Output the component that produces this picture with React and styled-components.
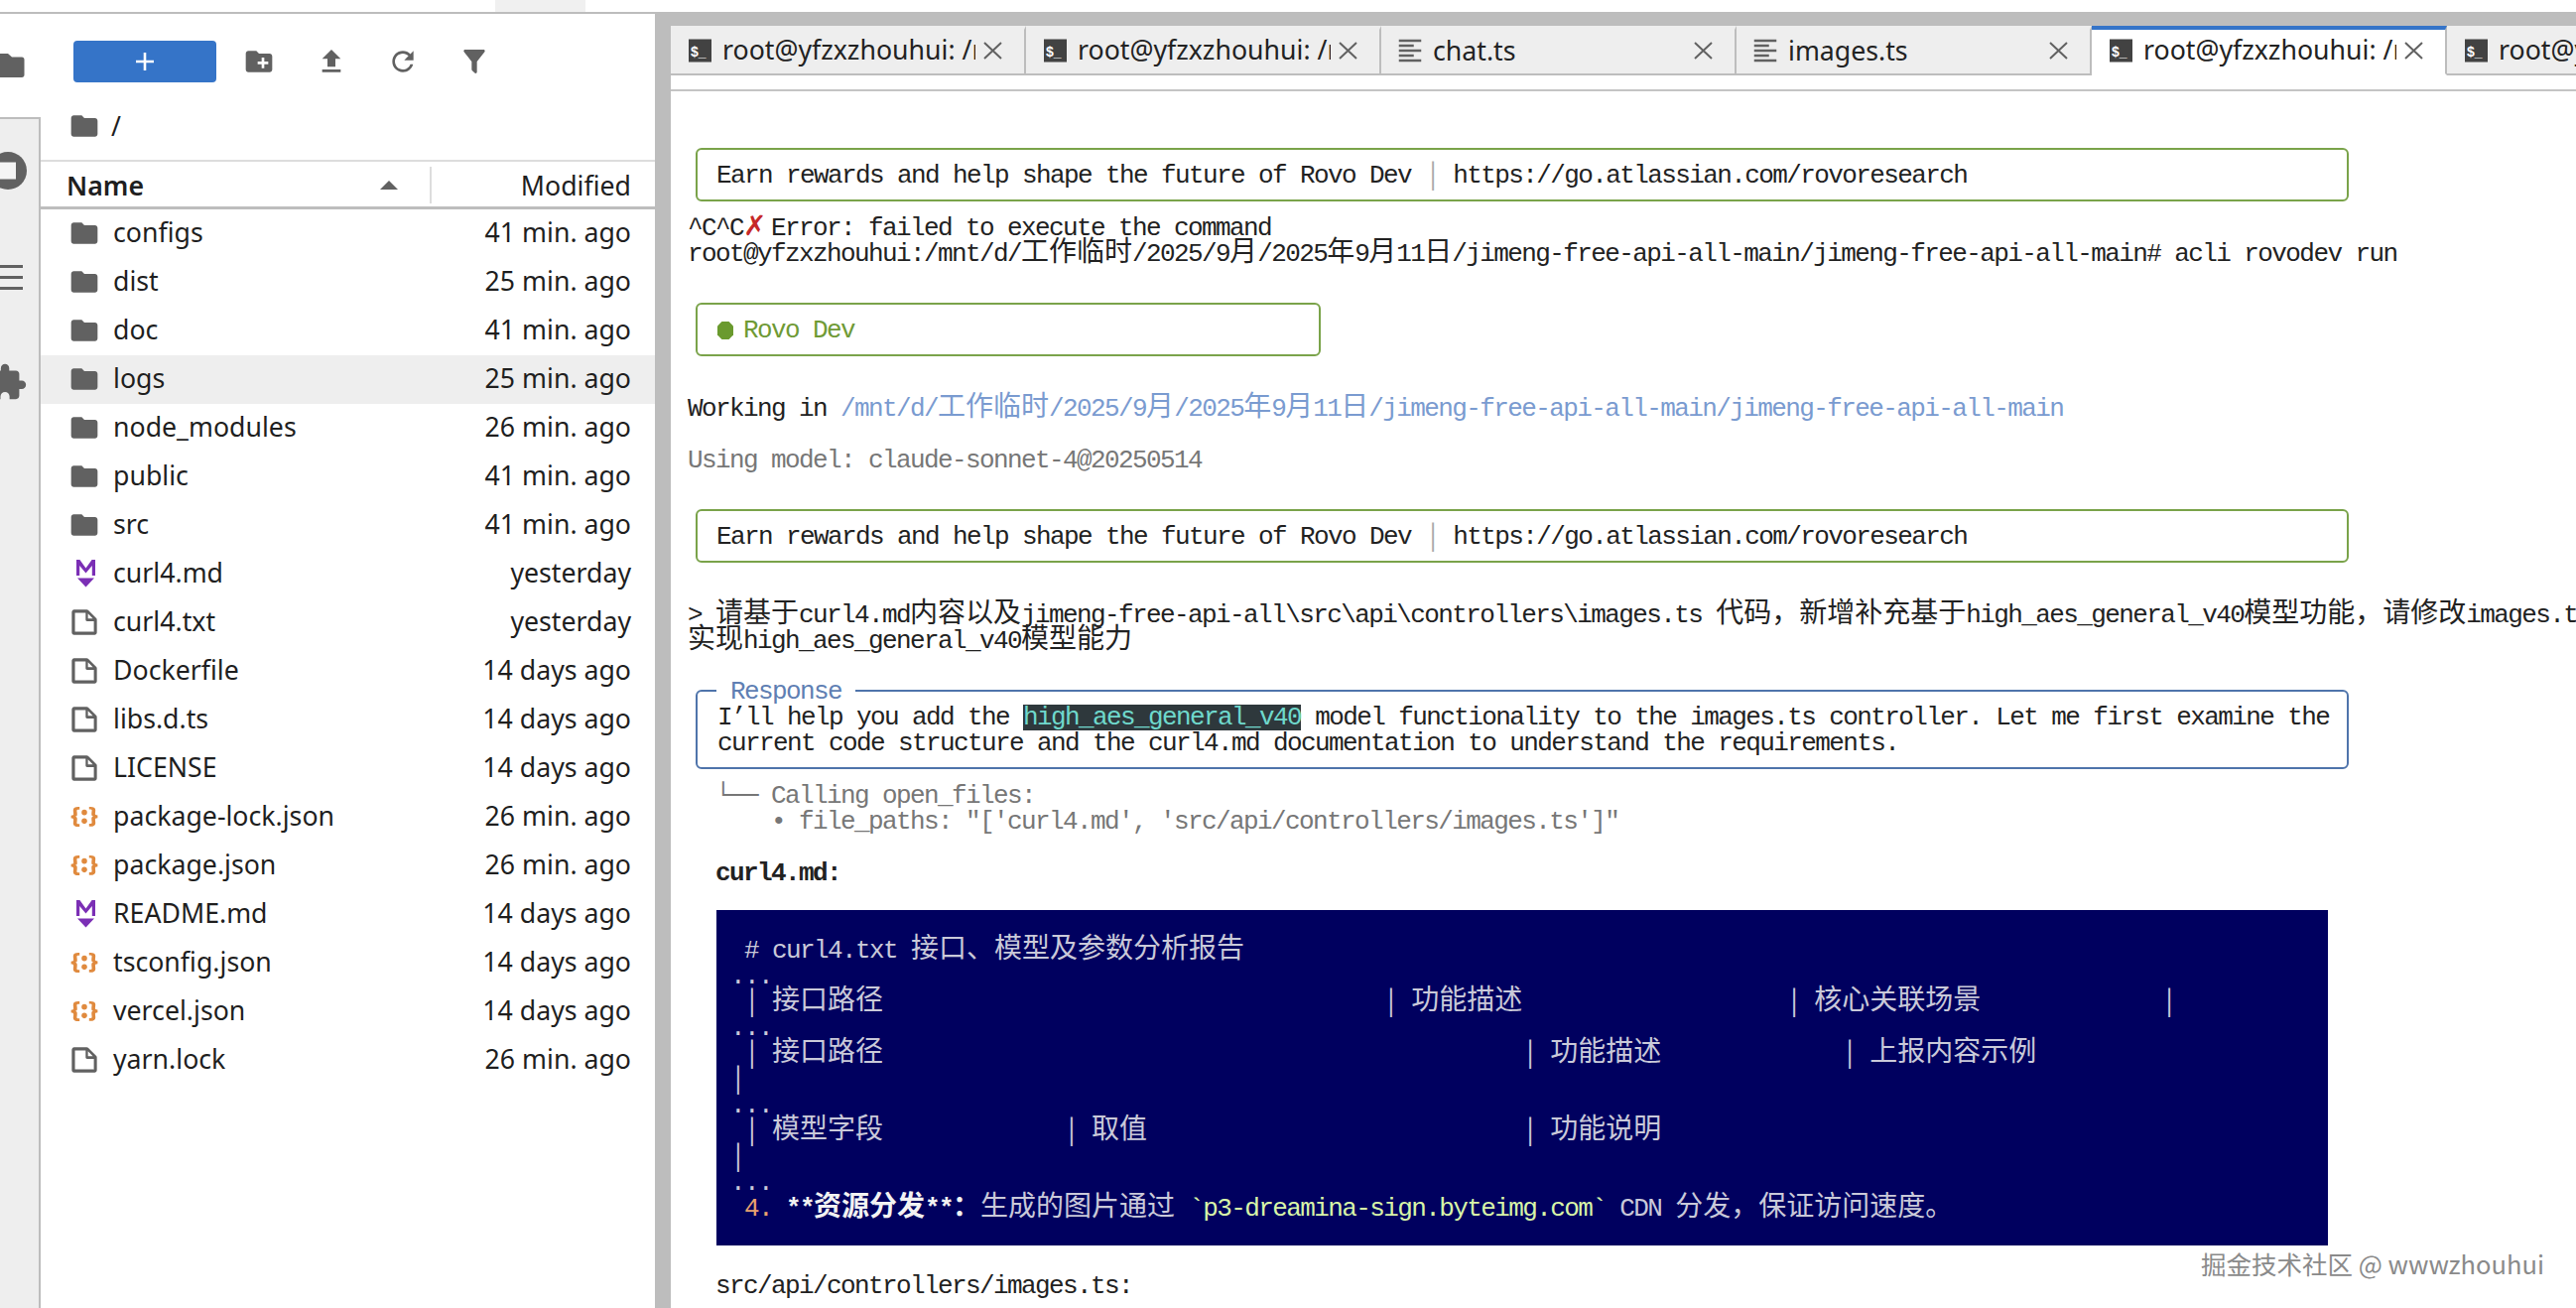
import React from "react";
import styled, { createGlobalStyle } from "styled-components";

const Global = createGlobalStyle`
  html, body {
    margin: 0;
    padding: 0;
    background: #fff;
  }
  body {
    width: 2596px;
    height: 1318px;
    overflow: hidden;
  }
`;

const Page = styled.div`
  position: relative;
  width: 2596px;
  height: 1318px;
  overflow: hidden;
  display: flex;
  flex-direction: column;
  font-family: "Noto Sans", sans-serif;
  color: #1f1f1f;
`;
const TopStrip = styled.div`
  height: 12px;
  flex: none;
  background: #fff;
  padding-left: 499px;
  border-bottom: 2px solid #bdbdbd;
`;
const TopTab = styled.div`
  width: 91px;
  height: 12px;
  background: #f0f0f0;
`;
const Body = styled.div`
  flex: 1;
  display: flex;
  min-height: 0;
`;

/* left: file browser */
const LeftPanel = styled.div`
  width: 660px;
  flex: none;
  display: flex;
  flex-direction: column;
  background: #fff;
`;
const Toolbar = styled.div`
  height: 104px;
  flex: none;
  box-sizing: border-box;
  padding-top: 27px;
  display: flex;
  align-items: flex-start;
`;
const ClippedFolder = styled.svg`
  width: 25px;
  height: 26px;
  margin-top: 12px;
  margin-right: 49px;
  fill: #616161;
`;
const NewButton = styled.div`
  width: 144px;
  height: 42px;
  border-radius: 4px;
  background: #3574c8;
  display: flex;
  align-items: center;
  justify-content: center;
  margin-right: 27px;
`;
const ToolIcon = styled.svg`
  width: 32px;
  height: 32px;
  margin: 5px ${(p) => p.$gap || 0}px 0 0;
  fill: #616161;
  flex: none;
`;
const Lower = styled.div`
  flex: 1;
  display: flex;
  min-height: 0;
`;
const Rail = styled.div`
  width: 41px;
  flex: none;
  box-sizing: border-box;
  background: #eee;
  border-top: 2px solid #bdbdbd;
  border-right: 2px solid #bdbdbd;
  padding-top: 33px;
  display: flex;
  flex-direction: column;
  align-items: flex-start;
`;
const RailStop = styled.svg`
  width: 27px;
  height: 38px;
  margin-bottom: 76px;
`;
const RailMenu = styled.div`
  width: 23px;
  height: 25px;
  margin-bottom: 73px;
  display: flex;
  flex-direction: column;
  justify-content: space-between;
  span {
    display: block;
    height: 3px;
    background: #616161;
  }
`;
const RailPuzzle = styled.svg`
  width: 27px;
  height: 40px;
  fill: #616161;
`;
const Browser = styled.div`
  flex: 1;
  display: flex;
  flex-direction: column;
  min-width: 0;
`;
const Crumbs = styled.div`
  height: 43px;
  flex: none;
  box-sizing: border-box;
  display: flex;
  align-items: center;
  padding: 0 0 26px 28px;
  font-size: 26.700px;
  span {
    margin-left: 11px;
  }
`;
const FileIcon = styled.svg`
  width: 32px;
  height: 32px;
  flex: none;
  fill: ${(p) => p.$color || "#616161"};
`;
const ListHeader = styled.div`
  height: 44px;
  flex: none;
  display: flex;
  align-items: center;
  border-top: 2px solid #ddd;
  border-bottom: 3px solid #bdbdbd;
  padding: 1px 24px 0 26px;
  font-size: 26.700px;
`;
const NameHead = styled.div`
  font-weight: 600;
  flex: 1;
`;
const SortCaret = styled.div`
  width: 0;
  height: 0;
  border-left: 9px solid transparent;
  border-right: 9px solid transparent;
  border-bottom: 9px solid #616161;
  margin-right: 32px;
`;
const HeadDivider = styled.div`
  width: 2px;
  height: 37px;
  background: #ddd;
  margin-right: 90px;
`;
const FileRow = styled.div`
  height: 49px;
  flex: none;
  box-sizing: border-box;
  display: flex;
  align-items: center;
  padding: 0 24px 2px 28px;
  font-size: 26.700px;
  background: ${(p) => (p.$active ? "#eee" : "transparent")};
`;
const FileName = styled.div`
  flex: 1;
  margin: 0 0 2px 13px;
  white-space: nowrap;
`;
const FileTime = styled.div`
  white-space: nowrap;
  margin-bottom: 2px;
`;
const HeadTime = styled.div`
  white-space: nowrap;
`;

const Gutter = styled.div`
  flex: 1;
  min-width: 0;
  background: #bdbdbd;
  padding: 12px 0 0 16px;
  display: flex;
  flex-direction: column;
`;
const TabBar = styled.div`
  height: 50px;
  flex: none;
  display: flex;
  background: #eee;
  overflow: hidden;
`;
const Tab = styled.div`
  width: 358px;
  flex: none;
  box-sizing: border-box;
  display: flex;
  align-items: center;
  padding: 0 22px 0 14px;
  font-size: 26.700px;
  color: #222;
  border-right: 2px solid #bdbdbd;
  background: ${(p) => (p.$active ? "#fff" : "#eee")};
  border-top: 4px solid ${(p) => (p.$active ? "#3574c8" : "#eee")};
  border-bottom: 2px solid ${(p) => (p.$active ? "#fff" : "#bdbdbd")};
`;
const TabTitle = styled.div`
  flex: 1;
  min-width: 0;
  overflow: hidden;
  white-space: nowrap;
  margin: -4px 8px 0 8px;
`;
const TabIconBox = styled.svg`
  width: 30px;
  height: 30px;
  flex: none;
  margin-top: -2px;
`;
const CloseMark = styled.svg`
  width: 19px;
  height: 18px;
  flex: none;
  stroke: #616161;
  stroke-width: 2;
  margin-top: -2px;
`;
const TabGap = styled.div`
  height: 14px;
  flex: none;
  background: #fff;
  border-bottom: 2px solid #c4c4c4;
`;

/* right: terminal */
const Terminal = styled.div`
  flex: 1;
  min-height: 0;
  background: #fff;
  overflow: hidden;
  padding: 45px 0 0 17px;
  font-family: "Liberation Mono", monospace;
  font-size: 26px;
  letter-spacing: -1.600px;
  line-height: 26px;
  color: #222;
`;
const Line = styled.div`
  box-sizing: border-box;
  height: 26px;
  padding-top: 2px;
  white-space: pre;
  color: ${(p) => p.$color || "inherit"};
  font-weight: ${(p) => (p.$bold ? 700 : 400)};
`;
const Han = styled.span`
  font-family: "Noto Sans CJK SC", sans-serif;
  font-size: 28px;
  letter-spacing: 0;
  line-height: 0;
  font-weight: inherit;
`;
const Box = styled.div`
  box-sizing: border-box;
  width: ${(p) => p.$width}px;
  height: 54px;
  margin: 12px 0 12px 8px;
  border: 2px solid #7aa34a;
  border-radius: 6px;
  padding: 13px 0 0 19px;
  white-space: pre;
  color: ${(p) => p.$color || "inherit"};
`;
const Bar = styled.span`
  color: #aaa;
`;
const Hexagon = styled.svg`
  width: 16px;
  height: 18px;
  vertical-align: -2px;
  fill: #6a9a2e;
  margin: 0 10px 0 1px;
`;
const ResponseBox = styled.div`
  position: relative;
  box-sizing: border-box;
  width: 1666px;
  height: 80px;
  margin: 12px 0 12px 8px;
  border: 2px solid #4f74ab;
  border-radius: 6px;
  padding: 13px 0 0 20px;
  white-space: pre;
`;
const Legend = styled.span`
  position: absolute;
  top: -13px;
  left: 19px;
  background: #fff;
  padding: 0 14px;
  color: #5f7fb3;
`;
const Mark = styled.span`
  display: inline-block;
  height: 26px;
  background: #2e383c;
  color: #6fd8cc;
`;
const CrossMark = styled.span`
  display: inline-block;
  width: 28px;
  color: #c62828;
  font-family: "DejaVu Sans", sans-serif;
  font-size: 28px;
  letter-spacing: 0;
  line-height: 0;
`;
const Path = styled.span`
  color: #7a9bd0;
`;
const NavyBlock = styled.div`
  width: 1624px;
  height: 338px;
  margin: 26px 0 0 29px;
  box-sizing: border-box;
  padding: 26px 0 0 14px;
  background: #00005f;
  color: #c9c9d9;
`;
const Orange = styled.span`
  color: #e8a26e;
`;
const Strong = styled.span`
  color: #f2f2f2;
  font-weight: 700;
`;
const Code = styled.span`
  color: #d8f5a8;
`;
const Watermark = styled.div`
  position: absolute;
  left: 2218px;
  top: 1256px;
  font-family: "Noto Sans CJK SC", "Noto Sans", sans-serif;
  font-size: 25.500px;
  line-height: 34px;
  white-space: nowrap;
  color: #8a8a8a;
  text-shadow: 0 0 2px #fff, 1px 1px 1px #fff;
`;

// CJK cells are two columns wide, so they get their own font size
const hanRun = /([\u3000-\u9fff\uff00-\uffef]+)/;
const Cn = ({ children }) =>
  String(children)
    .split(hanRun)
    .map((part, i) => (i % 2 ? <Han key={i}>{part}</Han> : part));

const sp = (n) => " ".repeat(n);

const folderPath =
  "M10 4H4c-1.100 0-1.990.9-1.990 2L2 18c0 1.100.9 2 2 2h16c1.100 0 2-.9 2-2V8c0-1.100-.9-2-2-2h-8l-2-2z";
const filePath =
  "M19.300 8.200l-5.500-5.500c-.3-.3-.7-.5-1.200-.5H3.900c-.8.1-1.600.9-1.600 1.800v14.100c0 .9.7 1.600 1.600 1.600h14.200c.9 0 1.600-.7 1.600-1.600V9.400c.1-.5-.1-.9-.4-1.200zm-5.800-3.300l3.400 3.600h-3.400V5zm3.900 12.700H4.700c-.1 0-.2 0-.2-.2V4.700c0-.1.1-.2.2-.2h7.200v4.400s0 .8.3 1.100c.3.3 1.100.3 1.100.3h4.300v7.200s-.1.2-.2.2z";
const jsonPath =
  "M20.200 11.800c-1.600 0-1.700.5-1.700 1 0 .4.1.9.1 1.300.1.5.1.9.1 1.300 0 1.700-1.400 2.300-3.500 2.300h-.9v-1.900h.5c1.100 0 1.400 0 1.400-.8 0-.3 0-.6-.1-1 0-.4-.1-.8-.1-1.200 0-1.300 0-1.800 1.300-2-1.300-.2-1.300-.7-1.300-2 0-.4.1-.8.1-1.200.1-.4.1-.7.1-1 0-.8-.4-.7-1.400-.8h-.5V4.100h.9c2.200 0 3.500.7 3.500 2.300 0 .4-.1.9-.1 1.300-.1.5-.1.9-.1 1.300 0 .5.2 1 1.700 1v1.800zM1.800 10.100c1.600 0 1.700-.5 1.700-1 0-.4-.1-.9-.1-1.300-.1-.5-.1-.9-.1-1.300 0-1.600 1.400-2.300 3.500-2.300h.9v1.900h-.5c-1 0-1.400 0-1.400.8 0 .3 0 .6.1 1 0 .2.1.6.1 1 0 1.300 0 1.800-1.300 2C6 11.200 6 11.700 6 13c0 .4-.1.8-.1 1.200-.1.3-.1.7-.1 1 0 .8.3.8 1.400.8h.5v1.900h-.9c-2.100 0-3.500-.6-3.500-2.300 0-.4.1-.9.1-1.300.1-.5.1-.9.1-1.300 0-.5-.2-1-1.700-1v-1.800z";

const FolderIcon = () => (
  <FileIcon viewBox="0 0 24 24">
    <path d={folderPath} />
  </FileIcon>
);
const PlainIcon = () => (
  <FileIcon viewBox="0 0 22 22">
    <path d={filePath} />
  </FileIcon>
);
const JsonIcon = () => (
  <FileIcon viewBox="0 0 22 22" $color="#e08a3e">
    <path d={jsonPath} />
    <circle cx="11" cy="8" r="1.900" />
    <circle cx="11" cy="14" r="1.900" />
  </FileIcon>
);
const MarkdownIcon = () => (
  <FileIcon viewBox="0 0 32 32" $color="#7b2fb5">
    <path d="M8 2h3.400l6.100 8.500L23.600 2H27v16h-3.200V8l-6.300 7.500L11.200 8v10H8z" />
    <path d="M9 20.500h17l-8.500 9z" />
  </FileIcon>
);

const files = [
  ["configs", "41 min. ago", FolderIcon],
  ["dist", "25 min. ago", FolderIcon],
  ["doc", "41 min. ago", FolderIcon],
  ["logs", "25 min. ago", FolderIcon],
  ["node_modules", "26 min. ago", FolderIcon],
  ["public", "41 min. ago", FolderIcon],
  ["src", "41 min. ago", FolderIcon],
  ["curl4.md", "yesterday", MarkdownIcon],
  ["curl4.txt", "yesterday", PlainIcon],
  ["Dockerfile", "14 days ago", PlainIcon],
  ["libs.d.ts", "14 days ago", PlainIcon],
  ["LICENSE", "14 days ago", PlainIcon],
  ["package-lock.json", "26 min. ago", JsonIcon],
  ["package.json", "26 min. ago", JsonIcon],
  ["README.md", "14 days ago", MarkdownIcon],
  ["tsconfig.json", "14 days ago", JsonIcon],
  ["vercel.json", "14 days ago", JsonIcon],
  ["yarn.lock", "26 min. ago", PlainIcon],
];

const TerminalIcon = () => (
  <TabIconBox viewBox="0 0 30 30">
    <rect x="4" y="3.500" width="23" height="23" fill="#424242" />
    <text x="6" y="21" fontSize="14" fontWeight="700" fill="#fff" fontFamily="Liberation Sans">
      $_
    </text>
  </TabIconBox>
);
const LinesIcon = () => (
  <TabIconBox viewBox="0 0 24 24">
    <path
      fill="#616161"
      d="M15 15H3v2h12v-2zm0-8H3v2h12V7zM3 13h18v-2H3v2zm0 8h18v-2H3v2zM3 3v2h18V3H3z"
    />
  </TabIconBox>
);
const Close = () => (
  <CloseMark viewBox="0 0 19 18">
    <path d="M1 1l17 16M18 1L1 17" fill="none" />
  </CloseMark>
);

const tabs = [
  { title: "root@yfzxzhouhui: /mnt/d/工作临时", icon: TerminalIcon },
  { title: "root@yfzxzhouhui: /mnt/d/工作临时", icon: TerminalIcon },
  { title: "chat.ts", icon: LinesIcon },
  { title: "images.ts", icon: LinesIcon },
  { title: "root@yfzxzhouhui: /mnt/d/工作临时", icon: TerminalIcon, active: true },
  { title: "root@yfzxzhouhui: /mnt/d/工作临时", icon: TerminalIcon },
];

const earn = (
  <>
    Earn rewards and help shape the future of Rovo Dev <Bar>│</Bar> https://go.atlassian.com/rovoresearch
  </>
);

export default function App() {
  return (
    <Page>
      <Global />
      <TopStrip>
        <TopTab />
      </TopStrip>
      <Body>
        <LeftPanel>
          <Toolbar>
            <ClippedFolder viewBox="7 4 25 26">
              <path d="M15 5H7v24h22c1.500 0 2.500-1 2.500-2.500V11c0-1.500-1-2.500-2.500-2.500H19z" />
            </ClippedFolder>
            <NewButton>
              <svg width="20" height="20" viewBox="0 0 20 20">
                <path d="M10 1v18M1 10h18" stroke="#fff" strokeWidth="2.600" />
              </svg>
            </NewButton>
            <ToolIcon viewBox="0 0 24 24" $gap={41}>
              <path d="M20 6h-8l-2-2H4c-1.100 0-1.990.9-1.990 2L2 18c0 1.100.9 2 2 2h16c1.100 0 2-.9 2-2V8c0-1.100-.9-2-2-2zm-1 8h-3v3h-2v-3h-3v-2h3V9h2v3h3v2z" />
            </ToolIcon>
            <ToolIcon viewBox="0 0 24 24" $gap={40}>
              <path d="M9 16h6v-6h4l-7-7-7 7h4zm-4 2h14v2H5z" />
            </ToolIcon>
            <ToolIcon viewBox="0 0 24 24" $gap={40}>
              <path d="M17.650 6.350C16.200 4.900 14.210 4 12 4c-4.420 0-7.990 3.580-7.990 8s3.570 8 7.990 8c3.730 0 6.840-2.550 7.730-6h-2.080c-.82 2.330-3.040 4-5.650 4-3.310 0-6-2.690-6-6s2.690-6 6-6c1.660 0 3.140.69 4.220 1.780L13 11h7V4l-2.350 2.350z" />
            </ToolIcon>
            <ToolIcon viewBox="0 0 24 24">
              <path d="M14 12v7.880c.04.3-.06.62-.29.83-.39.39-1.020.39-1.410 0l-2.010-2.010c-.23-.23-.33-.54-.29-.83V12h-.03L4.210 4.620c-.34-.43-.26-1.060.17-1.400C4.570 3.080 4.780 3 5 3h14c.22 0 .43.08.62.22.43.34.51.97.17 1.400L14.030 12H14z" />
            </ToolIcon>
          </Toolbar>
          <Lower>
            <Rail>
              <RailStop viewBox="0 0 27 38">
                <circle cx="8" cy="19" r="19" fill="#616161" />
                <rect x="0" y="10.500" width="16" height="17" fill="#f4f4f4" />
              </RailStop>
              <RailMenu>
                <span />
                <span />
                <span />
              </RailMenu>
              <RailPuzzle viewBox="7.500 0 16 24" preserveAspectRatio="xMinYMin slice">
                <path d="M20.500 11H19V7c0-1.100-.9-2-2-2h-4V3.500C13 2.120 11.880 1 10.500 1S8 2.120 8 3.500V5H4c-1.100 0-1.990.9-1.990 2v3.800H3.500c1.490 0 2.700 1.210 2.700 2.700s-1.210 2.700-2.700 2.700H2V20c0 1.100.9 2 2 2h3.800v-1.500c0-1.490 1.210-2.700 2.700-2.700 1.490 0 2.700 1.210 2.700 2.700V22H17c1.100 0 2-.9 2-2v-4h1.500c1.380 0 2.500-1.120 2.500-2.500S21.880 11 20.500 11z" />
              </RailPuzzle>
            </Rail>
            <Browser>
              <Crumbs>
                <FolderIcon />
                <span>/</span>
              </Crumbs>
              <ListHeader>
                <NameHead>Name</NameHead>
                <SortCaret />
                <HeadDivider />
                <HeadTime>Modified</HeadTime>
              </ListHeader>
              {files.map(([name, time, Icon]) => (
                <FileRow key={name} $active={name === "logs"}>
                  <Icon />
                  <FileName>{name}</FileName>
                  <FileTime>{time}</FileTime>
                </FileRow>
              ))}
            </Browser>
          </Lower>
        </LeftPanel>
        <Gutter>
          <TabBar>
            {tabs.map((tab, i) => (
              <Tab key={i} $active={tab.active}>
                <tab.icon />
                <TabTitle>{tab.title}</TabTitle>
                <Close />
              </Tab>
            ))}
          </TabBar>
          <TabGap />
          <Terminal>
            <Box $width={1666}>{earn}</Box>
            <Line>
              ^C^C<CrossMark>✗</CrossMark>Error: failed to execute the command
            </Line>
            <Line>
              <Cn>root@yfzxzhouhui:/mnt/d/工作临时/2025/9月/2025年9月11日/jimeng-free-api-all-main/jimeng-free-api-all-main# acli rovodev run</Cn>
            </Line>
            <Line />
            <Box $width={630} $color="#6f9a35">
              <Hexagon viewBox="0 0 18 20">
                <path d="M5 0h8l5 5v10l-5 5H5l-5-5V5z" />
              </Hexagon>
              Rovo Dev
            </Box>
            <Line />
            <Line>
              Working in <Path><Cn>/mnt/d/工作临时/2025/9月/2025年9月11日/jimeng-free-api-all-main/jimeng-free-api-all-main</Cn></Path>
            </Line>
            <Line />
            <Line $color="#777">Using model: claude-sonnet-4@20250514</Line>
            <Line />
            <Box $width={1666}>{earn}</Box>
            <Line />
            <Line>
              <Cn>{"> 请基于curl4.md内容以及jimeng-free-api-all\\src\\api\\controllers\\images.ts 代码，新增补充基于high_aes_general_v40模型功能，请修改images.ts"}</Cn>
            </Line>
            <Line>
              <Cn>实现high_aes_general_v40模型能力</Cn>
            </Line>
            <Line />
            <ResponseBox>
              <Legend>Response</Legend>
              I’ll help you add the <Mark>high_aes_general_v40</Mark> model functionality to the images.ts controller. Let me first examine the
              {"\n"}current code structure and the curl4.md documentation to understand the requirements.
            </ResponseBox>
            <Line $color="#777">{"  └── Calling open_files:"}</Line>
            <Line $color="#777">{"      • file_paths: \"['curl4.md', 'src/api/controllers/images.ts']\""}</Line>
            <Line />
            <Line $bold>{"  curl4.md:"}</Line>
            <NavyBlock>
              <Line>
                <Cn>{" # curl4.txt 接口、模型及参数分析报告"}</Cn>
              </Line>
              <Line>...</Line>
              <Line>
                <Cn>{` │ 接口路径${sp(36)}│ 功能描述${sp(19)}│ 核心关联场景${sp(13)}│`}</Cn>
              </Line>
              <Line>...</Line>
              <Line>
                <Cn>{` │ 接口路径${sp(46)}│ 功能描述${sp(13)}│ 上报内容示例`}</Cn>
              </Line>
              <Line>│</Line>
              <Line>...</Line>
              <Line>
                <Cn>{` │ 模型字段${sp(13)}│ 取值${sp(27)}│ 功能说明`}</Cn>
              </Line>
              <Line>│</Line>
              <Line>...</Line>
              <Line>
                <Orange>{" 4."}</Orange> <Strong><Cn>**资源分发**：</Cn></Strong><Cn>生成的图片通过 </Cn><Code>`p3-dreamina-sign.byteimg.com`</Code> <Cn>CDN 分发，保证访问速度。</Cn>
              </Line>
            </NavyBlock>
            <Line />
            <Line>{"  src/api/controllers/images.ts:"}</Line>
          </Terminal>
        </Gutter>
      </Body>
      <Watermark>掘金技术社区 @ wwwzhouhui</Watermark>
    </Page>
  );
}
